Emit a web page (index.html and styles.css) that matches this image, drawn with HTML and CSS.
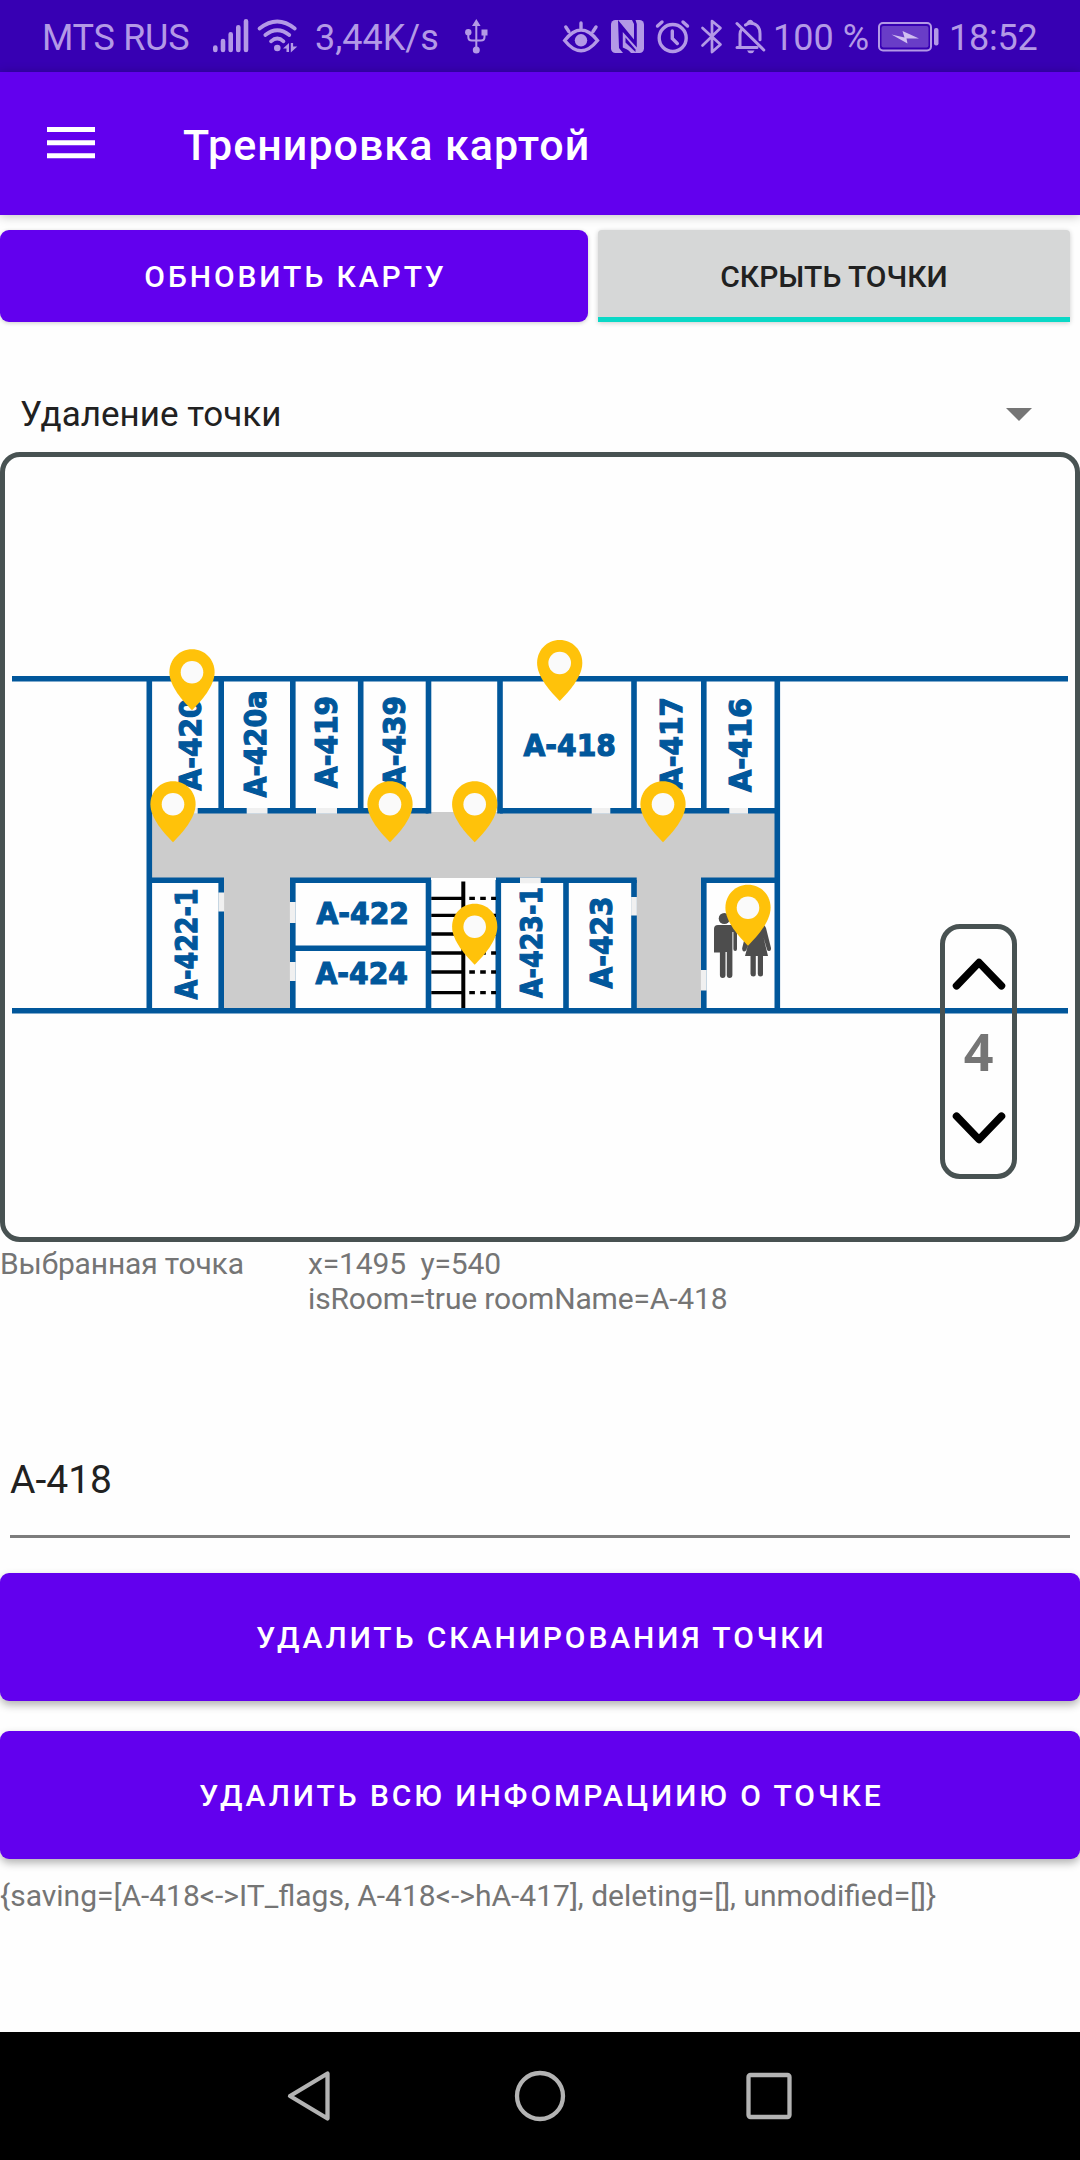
FILE: index.html
```html
<!DOCTYPE html>
<html lang="ru">
<head>
<meta charset="utf-8">
<title>Тренировка картой</title>
<link rel="stylesheet" href="styles.css">
</head>
<body>
<div class="screen">
  <div class="status">
    <span class="carrier">MTS RUS</span>
    <svg class="signal" width="38" height="72" viewBox="212 0 38 72" fill="none" stroke="currentColor" stroke-width="4.6" stroke-linecap="round"><path d="M215.3 47.5V50M223 41V50M230.7 34.3V50M238.3 27.3V50M246 21.3V50"/></svg>
    <svg class="wifi" width="44" height="72" viewBox="256 0 44 72" fill="none" stroke="currentColor" stroke-width="3.7" stroke-linecap="round"><path d="M259.5 28.5Q277.3 14.5 294.8 28.5M265.3 35Q277.3 25.5 289.3 35M271 41.3Q277.3 35.8 283.5 41.3"/><circle cx="277.3" cy="48" r="3.3" fill="currentColor" stroke="none"/><path d="M289 43v9h-2.5v-3.500h-3.500zM290.800 43h2.300v3.500h4.200l-6.500 6z" fill="currentColor" stroke="none"/></svg>
    <span class="speed">3,44K/s</span>
    <svg class="usb" width="26" height="72" viewBox="464 0 26 72" fill="none" stroke="currentColor" stroke-width="2"><path d="M476.3 25V48M468.300 33v4q0 3.500 3.500 3.500h9.200q3.500 0 3.500-3.500V33"/><path d="M476.300 19l4.300 7h-8.600zM481.500 29.500h6v6h-6z" fill="currentColor" stroke="none"/><circle cx="468.300" cy="32.300" r="3.200" fill="currentColor" stroke="none"/><circle cx="476.300" cy="50" r="3.500" fill="currentColor" stroke="none"/></svg>
    <svg class="eye" width="38" height="72" viewBox="562 0 38 72" fill="none" stroke="currentColor" stroke-width="3.400" stroke-linecap="round"><path d="M564.700 40.500Q581 19.500 597.500 40.500Q581 61 564.700 40.500zM565.800 27l3 4.500M581 23v5.500M596 27l-3 4.500"/><circle cx="581" cy="40.300" r="6.200" fill="currentColor" stroke="none"/></svg>
    <svg class="nfc" width="34" height="72" viewBox="611 0 34 72"><rect x="611" y="20" width="33" height="33" rx="4.500" fill="currentColor"/><path class="nfc-gap" d="M618 20L634 39.500V24L632 20H635.500L636.800 24V47.500L622.800 32V47.500L634.500 53H623L619 48z"/><path d="M623.500 34.500L635.500 50V53H631L623.500 45z" fill="currentColor"/><path class="nfc-gap" d="M625.500 37.500L635.500 49.500V52L625.500 42.500z"/></svg>
    <svg class="alarm" width="36" height="72" viewBox="655 0 36 72" fill="none" stroke="currentColor" stroke-width="3.400" stroke-linecap="round"><circle cx="672.700" cy="38" r="13.500"/><path d="M672.300 31v7.500l5 5M657.500 26l4.500-4M687.500 26l-4.500-4"/></svg>
    <svg class="bt" width="24" height="72" viewBox="700 0 24 72" fill="none" stroke="currentColor" stroke-width="2.700" stroke-linejoin="round" stroke-linecap="round"><path d="M702.500 28l18 16.500-8.500 7.500V21l8.500 7L702.500 45.500"/></svg>
    <svg class="bell" width="34" height="72" viewBox="734 0 34 72" fill="none" stroke="currentColor" stroke-width="3" stroke-linecap="round"><path d="M737 23.500L763.800 50M737 47.500h20M740 46V34q0-3 2-5M745.500 25q2-1.500 4-1.800c6.500-.500 10.500 4 10.500 10.500v6M748 23q2-3.500 4.500 0"/><path d="M747 50.500h7.500q-1 2.800-3.700 2.800t-3.800-2.800z" fill="currentColor" stroke="none"/></svg>
    <span class="percent">100 %</span>
    <svg class="battery" width="64" height="72" viewBox="877 0 64 72"><rect x="879" y="23" width="52" height="27.500" rx="4" fill="none" stroke="currentColor" stroke-width="2"/><rect x="881.500" y="26" width="47" height="21.500" rx="2" fill="currentColor" opacity=".4"/><rect x="934" y="28" width="4.500" height="17.500" rx="2" fill="currentColor"/><path class="bolt" d="M891.500 34.500L904.500 37.500 902.500 31 919 38.500 906.500 38.500 907.500 43.500z"/></svg>
    <span class="clock">18:52</span>
  </div>

  <header class="appbar">
    <svg width="48" height="34" viewBox="0 0 48 34" fill="#fff"><path d="M0 0h48v5H0zM0 13.200h48v5H0zM0 26.200h48v5H0z"/></svg>
    <h1>Тренировка картой</h1>
  </header>

  <main class="content">
    <div class="actions">
      <button class="btn update">Обновить карту</button>
      <button class="toggle">Скрыть точки</button>
    </div>
    <div class="spinner"><span>Удаление точки</span><i class="caret"></i></div>

    <section class="map">
      <svg class="plan" width="1080" height="790" viewBox="0 452 1080 790">
        <g fill="#ccc"><path d="M150 812H776V878H150zM223 870H291V1010H223zM636 870H702V1010H636z"/></g>
        <g class="walls">
          <path d="M12 678.700H1068M12 1010.700H1068"/>
          <path d="M149.300 678V1010M221.200 678V811M292.800 678V811M360.700 678V811M428.500 678V813.500M500 678V813.500M634 678V811M703.800 678V811M777.300 678V1010"/>
          <path d="M149.300 810.800H428.500M500 810.800H777.300M149.300 880.300H224M290 880.300H431M496 880.300H636.700M701 880.300H777.300"/>
          <path d="M221.200 880V1010M292.800 880V1010M428.500 880V1010M498.300 880V1010M566 880V1010M634 880V1010M703.800 880V1010M292.800 948.300H428.500"/>
        </g>
        <g class="doors"><path d="M178 810.800H197.700M246.700 810.800H267.500M316 810.800H337M382 810.800H400M591.700 810.800H610.300M729.300 810.800H748M520 880.300H540.700M221.200 892.500V911.500M292.800 902V923M292.800 962V981M634 897V915.500M703.800 970V990.500"/></g>
        <g stroke="#000" fill="none" stroke-width="3.300">
          <path d="M431.300 898.300H463M431.300 915.300H463M431.300 934H463M431.300 953H463M431.300 972H463M431.300 992.700H463"/>
          <path d="M463.300 881.500V1008" stroke-width="4"/>
          <path stroke-dasharray="5.600 5.300" d="M469.300 898.300H496M469.300 915.300H496M469.300 934H496M469.300 953H496M469.300 972H496M469.300 992.700H496"/>
        </g>
        <g class="rooms">
          <text transform="translate(200.500 790.500) rotate(-90)" textLength="92" lengthAdjust="spacingAndGlyphs">А-420</text>
          <text transform="translate(266 797.500) rotate(-90)" textLength="107" lengthAdjust="spacingAndGlyphs">А-420а</text>
          <text transform="translate(337.200 788) rotate(-90)" textLength="92" lengthAdjust="spacingAndGlyphs">А-419</text>
          <text transform="translate(404.500 788) rotate(-90)" textLength="92" lengthAdjust="spacingAndGlyphs">А-439</text>
          <text x="523.500" y="756.200" textLength="92.500" lengthAdjust="spacingAndGlyphs">А-418</text>
          <text transform="translate(681.500 789) rotate(-90)" textLength="92" lengthAdjust="spacingAndGlyphs">А-417</text>
          <text transform="translate(750.800 792) rotate(-90)" textLength="94" lengthAdjust="spacingAndGlyphs">А-416</text>
          <text transform="translate(197 999.500) rotate(-90)" textLength="111" lengthAdjust="spacingAndGlyphs">А-422-1</text>
          <text x="316.500" y="924" textLength="92.500" lengthAdjust="spacingAndGlyphs">А-422</text>
          <text x="315.500" y="984" textLength="92.500" lengthAdjust="spacingAndGlyphs">А-424</text>
          <text transform="translate(542.200 998) rotate(-90)" textLength="111" lengthAdjust="spacingAndGlyphs">А-423-1</text>
          <text transform="translate(612 988.500) rotate(-90)" textLength="92" lengthAdjust="spacingAndGlyphs">А-423</text>
        </g>
        <g fill="#4d4d4d">
          <circle cx="724.300" cy="918.500" r="5.600"/>
          <path d="M718 925h15q4 0 4 4v20q0 2-1.800 2t-1.800-2V932h-1v43q0 3-2.800 3t-2.800-3V952h-1.300v23q0 3-2.800 3t-2.800-3V952.500H714V929q0-4 4-4z"/>
          <circle cx="756.500" cy="918.500" r="5.600"/>
          <path d="M750 925h13q2 0 3 3l5 20q.300 2.500-1.500 3t-2.500-1.500l-3.500-12 4.500 18.500H763v18q0 2.500-2.500 2.500t-2.700-2.500V956h-2v18q0 2.500-2.500 2.500T750.500 974V956H745l3-11-1.500 4.500q-1 2.500-2.800 2t-1.500-3.500l5-20q1-3 2.800-3z"/>
        </g>
        <defs><g id="pin"><path d="M0-23C-12.700-23-22.600-13-22.600 0C-22.600 14-9 29 0 38C9 29 22.600 14 22.600 0C22.600-13 12.700-23 0-23z" fill="#ffc20a"/><circle r="11.300" fill="#fafafa"/></g></defs>
        <use href="#pin" x="192" y="672.300"/><use href="#pin" x="173" y="804.300"/><use href="#pin" x="390" y="804.300"/><use href="#pin" x="474.700" y="804.300"/><use href="#pin" x="474.700" y="926.700"/><use href="#pin" x="559.700" y="663"/><use href="#pin" x="663" y="804.300"/><use href="#pin" x="748" y="907.700"/>
      </svg>
      <div class="floors">
        <svg width="54" height="32" viewBox="0 0 54 32"><path d="M4.500 27.800L27 4.500 49.500 27.800"/></svg>
        <b>4</b>
        <svg width="54" height="32" viewBox="0 0 54 32"><path d="M4.500 4.200L27 27.500 49.500 4.200"/></svg>
      </div>
    </section>

    <div class="selected">
      <span class="label">Выбранная точка</span>
      <p class="info">x=1495&nbsp; y=540<br>isRoom=true roomName=A-418</p>
    </div>
    <div class="field">A-418</div>
    <button class="btn wide">Удалить сканирования точки</button>
    <button class="btn wide">Удалить всю инфомрациию о точке</button>
    <p class="log">{saving=[A-418&lt;-&gt;IT_flags, A-418&lt;-&gt;hA-417], deleting=[], unmodified=[]}</p>
  </main>

  <nav class="navbar">
    <svg width="506" height="60" viewBox="287 2066 506 60" fill="none" stroke="#b3b3b3" stroke-width="4.300" stroke-linejoin="round"><path d="M327.500 2073.500V2118.500L290 2096z"/><circle cx="540" cy="2096" r="23"/><rect x="748.500" y="2075" width="41" height="42" rx="2"/></svg>
  </nav>
</div>
</body>
</html>
```
FILE: styles.css
```css
* { box-sizing: border-box; }
body { margin: 0; font-family: Roboto, "Noto Sans", sans-serif; background: #fefefe; }
h1, p { margin: 0; }
button { border: 0; font: inherit; padding: 0; }
svg { display: block; flex: none; }
.screen { width: 1080px; height: 2160px; display: flex; flex-direction: column; overflow: hidden; }

.status { height: 72px; flex: none; background: #3700b3; color: #b399e6; display: flex; align-items: center; font-size: 36px; line-height: 72px; white-space: nowrap; }
.status span { flex: none; padding-top: 3px; }
.carrier { width: 170px; margin-left: 42px; letter-spacing: -.3px; }
.wifi { margin-left: 6px; }
.speed { width: 150px; padding-left: 15px; }
.usb { margin-left: 14px; }
.eye { margin-left: 72px; }
.nfc { margin-left: 11px; }
.nfc-gap { fill: #3700b3; }
.alarm { margin-left: 10px; }
.bt { margin-left: 9px; }
.bell { margin-left: 10px; }
.percent { width: 109px; padding-left: 5px; }
.bolt { fill: #d0bff0; }
.clock { padding-left: 8px; letter-spacing: -.2px; }

.appbar { height: 143px; flex: none; background: #6200ee; color: #fff; display: flex; align-items: center; padding-left: 47px; gap: 88px; box-shadow: 0 1px 10px rgba(0,0,0,.25); }
.appbar h1 { font-size: 43px; font-weight: 500; line-height: 52px; padding-top: 2px; letter-spacing: 1px; }

.content { flex: 1; display: flex; flex-direction: column; padding-top: 15px; }
.actions { display: flex; gap: 10px; padding-right: 10px; }
.btn { background: #6200ee; color: #fff; font-size: 30px; font-weight: 500; letter-spacing: 2.92px; text-transform: uppercase; border-radius: 9px; padding-left: 3px; }
.update { width: 588px; height: 92px; box-shadow: 0 1px 4px rgba(0,0,0,.2); }
.toggle { flex: 1; height: 92px; background: #d6d7d7; color: #212121; font-size: 30px; font-weight: 500; text-transform: uppercase; border-radius: 4px 4px 0 0; border-bottom: 5px solid #0ad8c6; padding-top: 5px; box-shadow: 0 1px 5px rgba(0,0,0,.2); }
.spinner { height: 130px; display: flex; align-items: flex-end; justify-content: space-between; padding: 0 48px 17px 20px; font-size: 35px; line-height: 40px; color: #212121; }
.caret { border: 13px solid transparent; border-top-color: #757575; border-bottom: 0; margin-bottom: 14px; }

.map { position: relative; height: 790px; flex: none; border: 5px solid #485252; border-radius: 20px; }
.plan { margin: -5px; }
.walls { fill: none; stroke: #01579b; stroke-width: 5.600px; }
.doors { fill: none; stroke: #f0f0f0; stroke-width: 5.800px; }
.rooms { font-family: "DejaVu Sans", sans-serif; font-weight: 700; font-size: 31px; fill: #01579b; stroke: #01579b; stroke-width: 1.200px; }
.floors { position: absolute; left: 935px; top: 467px; width: 77px; height: 255px; border: 5px solid #485252; border-radius: 20px; display: flex; flex-direction: column; align-items: center; justify-content: space-between; padding: 29px 0 30px; }
.floors svg { fill: none; stroke: #000; stroke-width: 7.500px; stroke-linecap: round; stroke-linejoin: round; }
.floors b { font: 700 52px/60px "Noto Sans", sans-serif; color: #757575; }

.selected { height: 195px; display: flex; font-size: 30px; line-height: 35px; letter-spacing: -.15px; color: #757575; padding-top: 4px; }
.label { width: 308px; }
.field { margin: 0 10px 35px; height: 101px; border-bottom: 3px solid #7d7d7d; font-size: 39px; line-height: 46px; padding-top: 20px; color: #212121; }
.wide { height: 128px; flex: none; margin-bottom: 30px; box-shadow: 0 4px 8px rgba(0,0,0,.3); }
.log { font-size: 30px; line-height: 35px; color: #757575; margin-top: -11px; white-space: nowrap; }

.navbar { height: 128px; flex: none; background: #000; display: flex; align-items: center; justify-content: center; }
```
